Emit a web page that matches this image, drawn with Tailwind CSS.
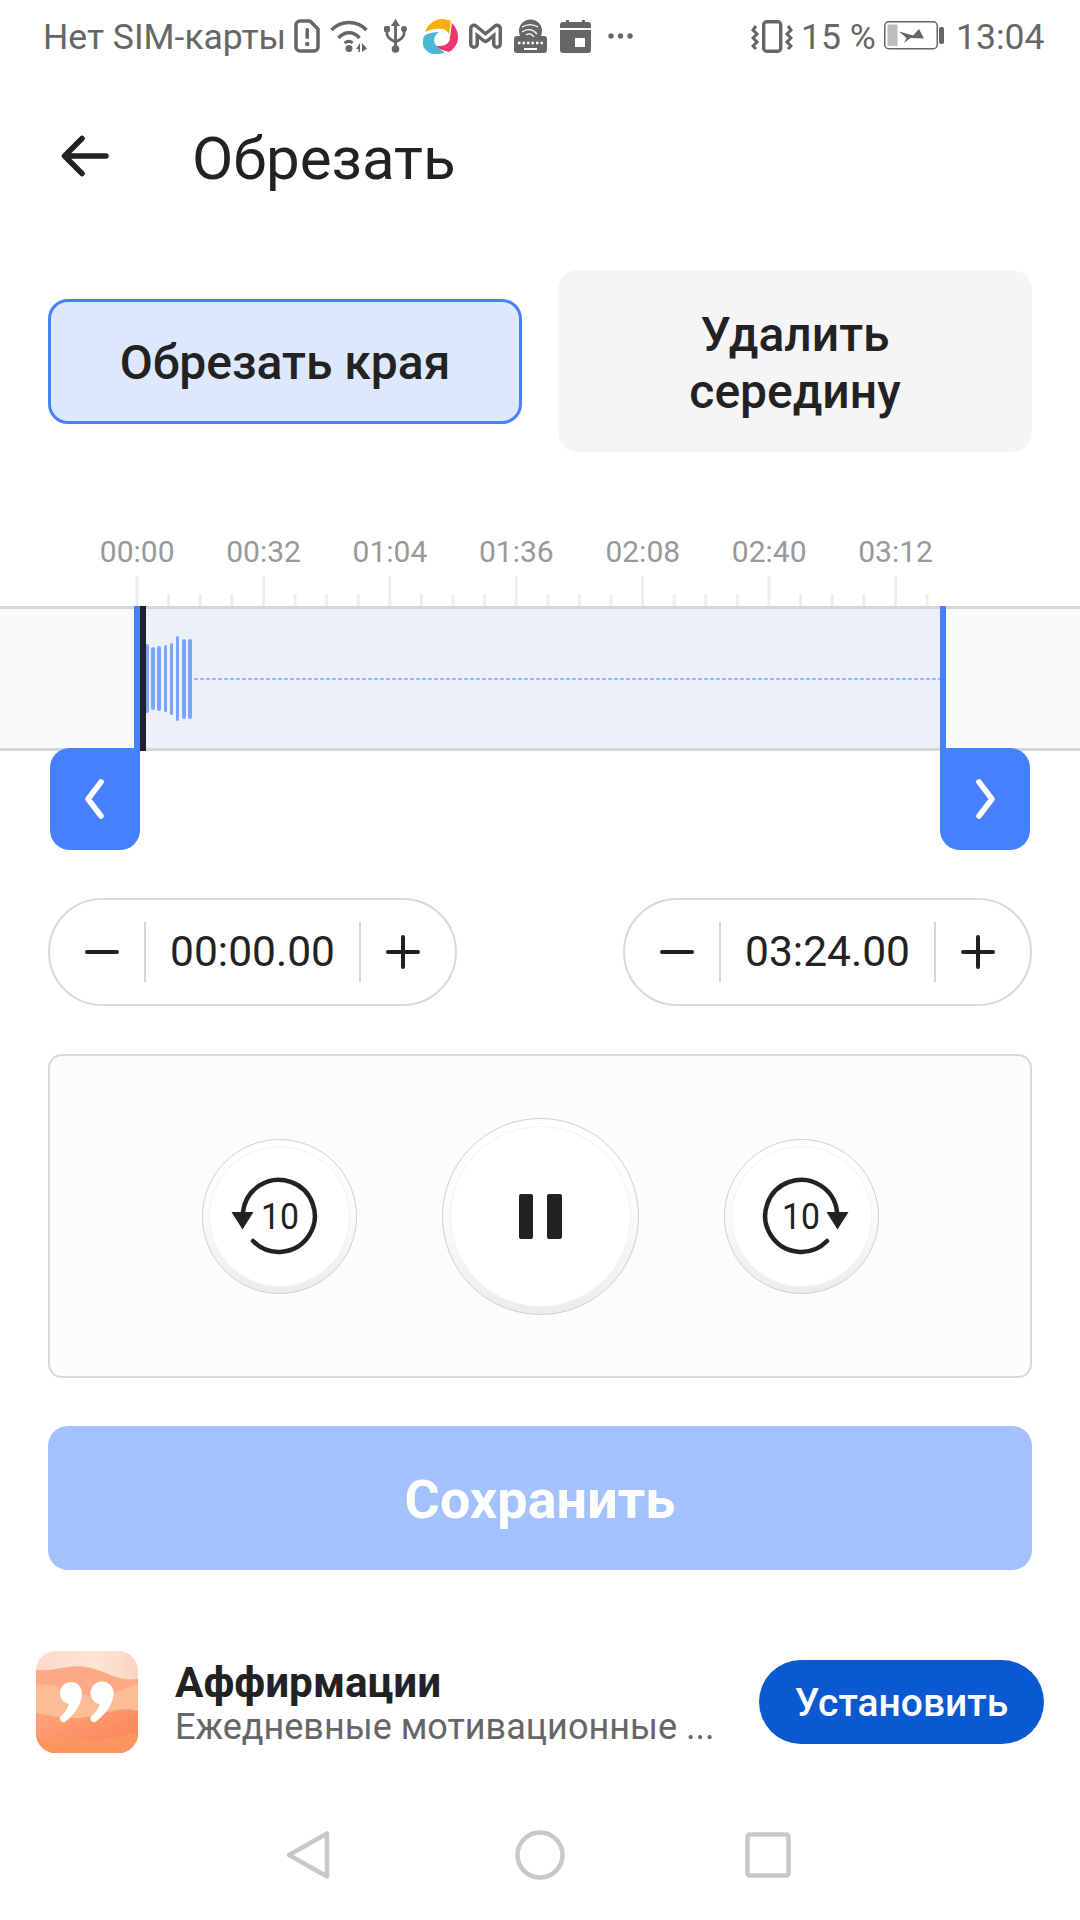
<!DOCTYPE html>
<html lang="ru">
<head>
  <meta charset="UTF-8" />
  <meta name="viewport" content="width=device-width, initial-scale=1.0" />
  <title>Обрезать</title>
  <script src="https://cdn.jsdelivr.net/npm/@tailwindcss/browser@4"></script>
</head>
<body class="bg-white font-['Roboto',sans-serif] text-[#222222]">
  <div class="flex h-[1920px] w-[1080px] flex-col overflow-hidden">

    <!-- Status bar -->
    <div class="flex h-[72px] items-center pl-[43px] text-[35.5px] leading-none text-[#666666]">
      <span class="w-[251px] whitespace-nowrap pt-[4px]">Нет SIM-карты</span>
      <svg width="26" height="34" viewBox="0 0 26 34" fill="none"><path d="M2 6a4 4 0 0 1 4-4h10l8 8v18a4 4 0 0 1-4 4H6a4 4 0 0 1-4-4z" stroke="#666" stroke-width="3.500" stroke-linejoin="round"/><rect x="11.500" y="9" width="3.500" height="11" rx="1.500" fill="#666"/><circle cx="13.200" cy="25" r="2.200" fill="#666"/></svg>
      <svg class="ml-[10px]" width="38" height="34" viewBox="0 0 38 34" fill="none"><path d="M1.500 11C11 1 27 1 36.500 11" stroke="#666" stroke-width="3.500"/><path d="M8.500 19c6-7 15-7 21 0" stroke="#666" stroke-width="3.500"/><path d="M14.500 24c3-2 6-2 8 0" stroke="#666" stroke-width="3"/><circle cx="19" cy="29.500" r="3.500" fill="#666"/><path d="M26 30l4-6v9h-1.500v-3zM32 24l5 5.500-5 3.500z" fill="#666"/></svg>
      <svg class="ml-[16px]" width="23" height="34" viewBox="0 0 23 34" fill="none"><path d="M11.500 4v25" stroke="#666" stroke-width="2.800"/><path d="M3 12v3c0 3 2 5 8.500 8 6.500-3 8.500-5 8.500-8v-3" stroke="#666" stroke-width="2.800"/><path d="M11.500 0l-4.500 7h9z" fill="#666"/><circle cx="11.500" cy="30" r="3.800" fill="#666"/><rect x="0" y="7" width="6" height="6" rx="1.500" fill="#666"/><circle cx="20" cy="10" r="3" fill="#666"/></svg>
      <svg class="ml-[16px]" width="35" height="35" viewBox="0 0 35 35"><path d="M2 13C5 5 12 0 19 0c4 0 7 1 9 2-1 4-1 9-2 13-2-3-4-5-7-5-6-1-11 0-17 3z" fill="#fdae0f"/><path d="M29 4c4 4 6 9 6 14 0 7-4 12-9 15-5-1-10-3-14-6 5 0 8 0 10-1 4-2 5-5 5-8 1-5 1-9 2-14z" fill="#ef346f"/><path d="M1 17c4-3 9-4 15-4-3 2-5 5-5 8 0 5 6 9 11 13-5 1-9 1-13 1-5-2-9-6-9-10 0-3 0-6 1-8z" fill="#4fb6d1"/></svg>
      <svg class="ml-[11px]" width="33" height="26" viewBox="0 0 33 26" fill="none"><path d="M5 21V5.500L16.500 15 28 5.500V21" stroke="#666" stroke-width="10" stroke-linejoin="round" stroke-linecap="round"/><path d="M5 21V5.500L16.500 15 28 5.500V21" stroke="#fff" stroke-width="3" stroke-linejoin="round" stroke-linecap="round"/></svg>
      <svg class="ml-[12px]" width="33" height="34" viewBox="0 0 33 34" fill="none"><circle cx="16.500" cy="12" r="11.500" fill="#666"/><path d="M8 8c5-3 11-3 16 0M8 13c5-4 11-3 15 2M12 16c3-2 6-1 8 2" stroke="#fff" stroke-width="1.300"/><path d="M3 17h4c3 5 16 5 19 0h4a3 3 0 0 1 3 3v11a3 3 0 0 1-3 3H3a3 3 0 0 1-3-3V20a3 3 0 0 1 3-3z" fill="#666"/><path d="M4 24h25" stroke="#fff" stroke-width="2.500" stroke-dasharray="2.500 2"/><rect x="10" y="29" width="13" height="2" fill="#fff"/></svg>
      <svg class="ml-[13px]" width="31" height="33" viewBox="0 0 31 33"><path d="M3 2h25a3 3 0 0 1 3 3v3H0V5a3 3 0 0 1 3-3z" fill="#666"/><rect x="6" y="0" width="3" height="4" fill="#666"/><rect x="22" y="0" width="3" height="4" fill="#666"/><path d="M0 10h31v20a3 3 0 0 1-3 3H3a3 3 0 0 1-3-3z" fill="#666"/><rect x="15" y="18" width="10" height="9" fill="#fff"/></svg>
      <svg class="ml-[17px]" width="25" height="8" viewBox="0 0 25 8"><circle cx="3" cy="4" r="2.700" fill="#666"/><circle cx="12.500" cy="4" r="2.700" fill="#666"/><circle cx="22" cy="4" r="2.700" fill="#666"/></svg>
      <svg class="ml-[118px]" width="42" height="33" viewBox="0 0 42 33" fill="none"><rect x="12.700" y="1.700" width="17" height="29.500" rx="3" stroke="#666" stroke-width="3.400"/><path d="M5 6L2 10l4 4-4 4 4 4-4 4 3 3M37 6l3 4-4 4 4 4-4 4 4 4-3 3" stroke="#666" stroke-width="3"/></svg>
      <span class="ml-[8px] w-[74px] whitespace-nowrap pt-[4px]">15 %</span>
      <svg class="ml-[9px]" width="60" height="30" viewBox="0 0 60 30" fill="none"><rect x="0.750" y="0.750" width="52.500" height="27" rx="4" stroke="#666" stroke-width="1.500"/><rect x="3.500" y="3.500" width="10" height="21.500" fill="#bdbdbd"/><path d="M15 10.500L29 14.500l6-6.500 5 9.500-13.500-.5-6.500 5 2.500-5z" fill="#666"/><rect x="55" y="6" width="5" height="17" rx="2" fill="#666"/></svg>
      <span class="ml-[12px] whitespace-nowrap pt-[4px]">13:04</span>
    </div>

    <!-- Header -->
    <div class="flex h-[168px] items-center pl-[61px]">
      <svg width="48" height="42" viewBox="0 0 48 42" fill="none"><path d="M45 21H4M21 3.500L3.500 21 21 38.500" stroke="#222" stroke-width="5.500" stroke-linecap="round" stroke-linejoin="round"/></svg>
      <h1 class="ml-[83px] pt-[6px] text-[60px] leading-none">Обрезать</h1>
    </div>
    <div class="h-[30px]"></div>

    <!-- Trim mode tabs -->
    <div class="flex h-[182px] items-center gap-[36px] px-[48px]">
      <div class="flex h-[125px] w-[474px] items-center justify-center rounded-[20px] border-[3px] border-[#4680fc] bg-[#dee8fd] pt-[4px] text-[48px] font-medium">Обрезать края</div>
      <div class="flex h-[182px] w-[474px] items-center justify-center rounded-[20px] bg-[#f5f5f5] pt-[4px] text-center text-[48px] leading-[57px] font-medium">Удалить<br />середину</div>
    </div>

    <!-- Timeline labels -->
    <div class="ml-[74px] mt-[80px] flex h-[40px] items-center text-[30px] leading-none text-[#999999]">
      <span class="w-[126.4px] text-center">00:00</span>
      <span class="w-[126.4px] text-center">00:32</span>
      <span class="w-[126.4px] text-center">01:04</span>
      <span class="w-[126.4px] text-center">01:36</span>
      <span class="w-[126.4px] text-center">02:08</span>
      <span class="w-[126.4px] text-center">02:40</span>
      <span class="w-[126.4px] text-center">03:12</span>
    </div>
    <svg class="mt-[3px] block" width="1080" height="31" viewBox="0 0 1080 31" fill="none">
      <path stroke="#eeeeee" stroke-width="3" d="M137 1v30M263.400 1v30M389.800 1v30M516.200 1v30M642.600 1v30M769 1v30M895.400 1v30M168.600 19v12M200.200 19v12M231.800 19v12M295 19v12M326.600 19v12M358.200 19v12M421.400 19v12M453 19v12M484.600 19v12M547.800 19v12M579.400 19v12M611 19v12M674.200 19v12M705.800 19v12M737.400 19v12M800.600 19v12M832.200 19v12M863.800 19v12M927 19v12"/>
    </svg>

    <!-- Waveform band -->
    <div class="relative flex h-[145px] border-y-[3px] border-[#d6d6d6] bg-[#fafafa]">
      <div class="absolute -top-[3px] left-[134px] h-[145px] w-[6px] bg-[#4680fc]"></div>
      <div class="absolute -top-[3px] left-[140px] z-10 h-[145px] w-[6px] bg-[#222222]"></div>
      <div class="absolute -top-[3px] left-[940px] h-[145px] w-[6px] bg-[#4680fc]"></div>
      <div class="ml-[140px] flex w-[800px] items-center bg-[#ebf0fb] pl-[5px]">
        <div class="flex items-center gap-[2.700px]">
          <div class="h-[69px] w-[3.500px] rounded-full bg-[#78a5fb]"></div>
          <div class="h-[63px] w-[3.500px] rounded-full bg-[#78a5fb]"></div>
          <div class="h-[65px] w-[3.500px] rounded-full bg-[#78a5fb]"></div>
          <div class="h-[67px] w-[3.500px] rounded-full bg-[#78a5fb]"></div>
          <div class="h-[72px] w-[3.500px] rounded-full bg-[#78a5fb]"></div>
          <div class="h-[85px] w-[3.500px] rounded-full bg-[#78a5fb]"></div>
          <div class="h-[80px] w-[3.500px] rounded-full bg-[#78a5fb]"></div>
          <div class="h-[80px] w-[3.500px] rounded-full bg-[#78a5fb]"></div>
        </div>
        <svg class="ml-[2px] flex-1" height="2" fill="none"><line x1="0" y1="1" x2="750" y2="1" stroke="#78a5fb" stroke-width="1.300" stroke-dasharray="4 2"/></svg>
      </div>
    </div>

    <!-- Trim handles -->
    <div class="relative z-20 -mt-[3px] flex justify-between px-[50px]">
      <div class="flex h-[102px] w-[90px] items-center justify-center rounded-[20px] rounded-tr-none bg-[#4680fc]">
        <svg width="22" height="42" viewBox="0 0 22 42" fill="none"><path d="M17 4L4 21l13 17" stroke="#fff" stroke-width="5.500" stroke-linecap="round" stroke-linejoin="round"/></svg>
      </div>
      <div class="flex h-[102px] w-[90px] items-center justify-center rounded-[20px] rounded-tl-none bg-[#4680fc]">
        <svg width="22" height="42" viewBox="0 0 22 42" fill="none"><path d="M5 4l13 17L5 38" stroke="#fff" stroke-width="5.500" stroke-linecap="round" stroke-linejoin="round"/></svg>
      </div>
    </div>

    <!-- Time steppers -->
    <div class="mt-[48px] flex justify-between px-[48px]">
      <div class="flex h-[108px] w-[409px] items-center rounded-full border-2 border-[#d9d9d9]">
        <svg class="ml-[35px]" width="34" height="4" viewBox="0 0 34 4"><rect width="34" height="4" rx="2" fill="#222"/></svg>
        <div class="ml-[25px] h-[60px] w-[2px] bg-[#d6d6d6]"></div>
        <span class="w-[213px] pt-[1px] text-center text-[42.5px] leading-none">00:00.00</span>
        <div class="h-[60px] w-[2px] bg-[#d6d6d6]"></div>
        <svg class="ml-[25px]" width="34" height="34" viewBox="0 0 34 34"><rect y="15" width="34" height="4" rx="2" fill="#222"/><rect x="15" width="4" height="34" rx="2" fill="#222"/></svg>
      </div>
      <div class="flex h-[108px] w-[409px] items-center rounded-full border-2 border-[#d9d9d9]">
        <svg class="ml-[35px]" width="34" height="4" viewBox="0 0 34 4"><rect width="34" height="4" rx="2" fill="#222"/></svg>
        <div class="ml-[25px] h-[60px] w-[2px] bg-[#d6d6d6]"></div>
        <span class="w-[213px] pt-[1px] text-center text-[42.5px] leading-none">03:24.00</span>
        <div class="h-[60px] w-[2px] bg-[#d6d6d6]"></div>
        <svg class="ml-[25px]" width="34" height="34" viewBox="0 0 34 34"><rect y="15" width="34" height="4" rx="2" fill="#222"/><rect x="15" width="4" height="34" rx="2" fill="#222"/></svg>
      </div>
    </div>

    <!-- Player panel -->
    <div class="mx-[48px] mt-[48px] flex h-[324px] items-center justify-center gap-[85px] rounded-[14px] border-2 border-[#d9d9d9] bg-[#fcfcfc]">
      <div class="flex h-[155px] w-[155px] items-center justify-center rounded-full border border-[#cfcfcf] bg-gradient-to-b from-white via-[#fbfbfb] to-[#ececec]">
        <div class="flex h-[141px] w-[141px] items-center justify-center rounded-full border border-[#f2f2f2] bg-white">
          <svg width="100" height="100" viewBox="0 0 100 100" fill="none">
            <path d="M14 46A36 36 0 1 1 24 75" stroke="#222" stroke-width="4.500" stroke-linecap="round"/>
            <path d="M2.500 46h22l-11 17.500z" fill="#222"/>
            <text x="32" y="63" font-family="Roboto" font-size="36" fill="#222" textLength="38" lengthAdjust="spacingAndGlyphs">10</text>
          </svg>
        </div>
      </div>
      <div class="flex h-[197px] w-[197px] items-center justify-center rounded-full border border-[#cfcfcf] bg-gradient-to-b from-white via-[#fbfbfb] to-[#ececec]">
        <div class="flex h-[181px] w-[181px] items-center justify-center gap-[14px] rounded-full border border-[#f2f2f2] bg-white">
          <div class="h-[45px] w-[14.500px] rounded-[2px] bg-[#222222]"></div>
          <div class="h-[45px] w-[14.500px] rounded-[2px] bg-[#222222]"></div>
        </div>
      </div>
      <div class="flex h-[155px] w-[155px] items-center justify-center rounded-full border border-[#cfcfcf] bg-gradient-to-b from-white via-[#fbfbfb] to-[#ececec]">
        <div class="flex h-[141px] w-[141px] items-center justify-center rounded-full border border-[#f2f2f2] bg-white">
          <svg width="100" height="100" viewBox="0 0 100 100" fill="none">
            <path d="M86 46A36 36 0 1 0 76 75" stroke="#222" stroke-width="4.500" stroke-linecap="round"/>
            <path d="M97.500 46h-22l11 17.500z" fill="#222"/>
            <text x="31" y="63" font-family="Roboto" font-size="36" fill="#222" textLength="38" lengthAdjust="spacingAndGlyphs">10</text>
          </svg>
        </div>
      </div>
    </div>

    <!-- Save -->
    <div class="mx-[48px] mt-[48px] flex h-[144px] items-center justify-center rounded-[20px] bg-[#a3c1fd] pt-[2px] text-[54px] font-bold text-white">Сохранить</div>

    <!-- Ad row -->
    <div class="mt-[81px] flex h-[102px] items-center px-[36px]">
      <svg class="shrink-0 rounded-[20px]" width="102" height="102" viewBox="0 0 102 102">
        <defs>
          <linearGradient id="adTop" x1="0" y1="0" x2="1" y2="0"><stop offset="0" stop-color="#fcd9cc"/><stop offset="0.6" stop-color="#fee5d3"/><stop offset="1" stop-color="#fdd3c2"/></linearGradient>
          <linearGradient id="adBottom" x1="0" y1="0" x2="1" y2="1"><stop offset="0" stop-color="#fca77c"/><stop offset="1" stop-color="#fc7e50"/></linearGradient>
        </defs>
        <rect width="102" height="102" fill="url(#adTop)"/>
        <path d="M0 19c20 2 30-6 50-3s30 15 52 12v74H0z" fill="#fcaa85"/>
        <path d="M0 34c20-3 40 10 60 12 16 0 30-12 42-12v68H0z" fill="#fbbd97"/>
        <path d="M0 62c20 4 40 8 60 2 16-5 30-8 42-4v42H0z" fill="url(#adBottom)"/>
        <path d="M0 86c30 4 60 8 102-6v22H0z" fill="#fd9560"/>
        <g fill="#fff"><circle cx="35" cy="42" r="11"/><path d="M46 42c0 11-7 21-16 28a3.500 3.500 0 0 1-5-5c5-4 8-10 9-18z"/><circle cx="66" cy="42" r="11.500"/><path d="M77.500 42c0 11-8 21-17 28a3.500 3.500 0 0 1-5-5c5-4 9-10 10-18z"/></g>
      </svg>
      <div class="ml-[37px] w-[546px] min-w-0 pt-[6px]">
        <div class="text-[42.25px] leading-[44px] font-bold">Аффирмации</div>
        <div class="whitespace-nowrap text-[36px] leading-[44px] text-[#666666]">Ежедневные мотивационные ...</div>
      </div>
      <div class="ml-auto flex h-[84px] w-[285px] shrink-0 items-center justify-center rounded-full bg-[#0a59d1] pt-[3px] text-[39px] font-medium text-white">Установить</div>
    </div>

    <!-- Navigation bar -->
    <div class="mt-[77px] flex h-[50px] items-center justify-center gap-[184px] pr-[4px]">
      <svg width="46" height="50" viewBox="0 0 46 50" fill="none"><path d="M42 3.500v43L4 25z" stroke="#c8c8c8" stroke-width="4.500" stroke-linejoin="round"/></svg>
      <svg width="50" height="50" viewBox="0 0 50 50" fill="none"><circle cx="25" cy="25" r="22.500" stroke="#c8c8c8" stroke-width="4.500"/></svg>
      <svg class="-ml-[4px]" width="46" height="46" viewBox="0 0 46 46" fill="none"><rect x="2.500" y="2.500" width="41" height="41" rx="2" stroke="#c8c8c8" stroke-width="4.500"/></svg>
    </div>
  </div>
</body>
</html>
